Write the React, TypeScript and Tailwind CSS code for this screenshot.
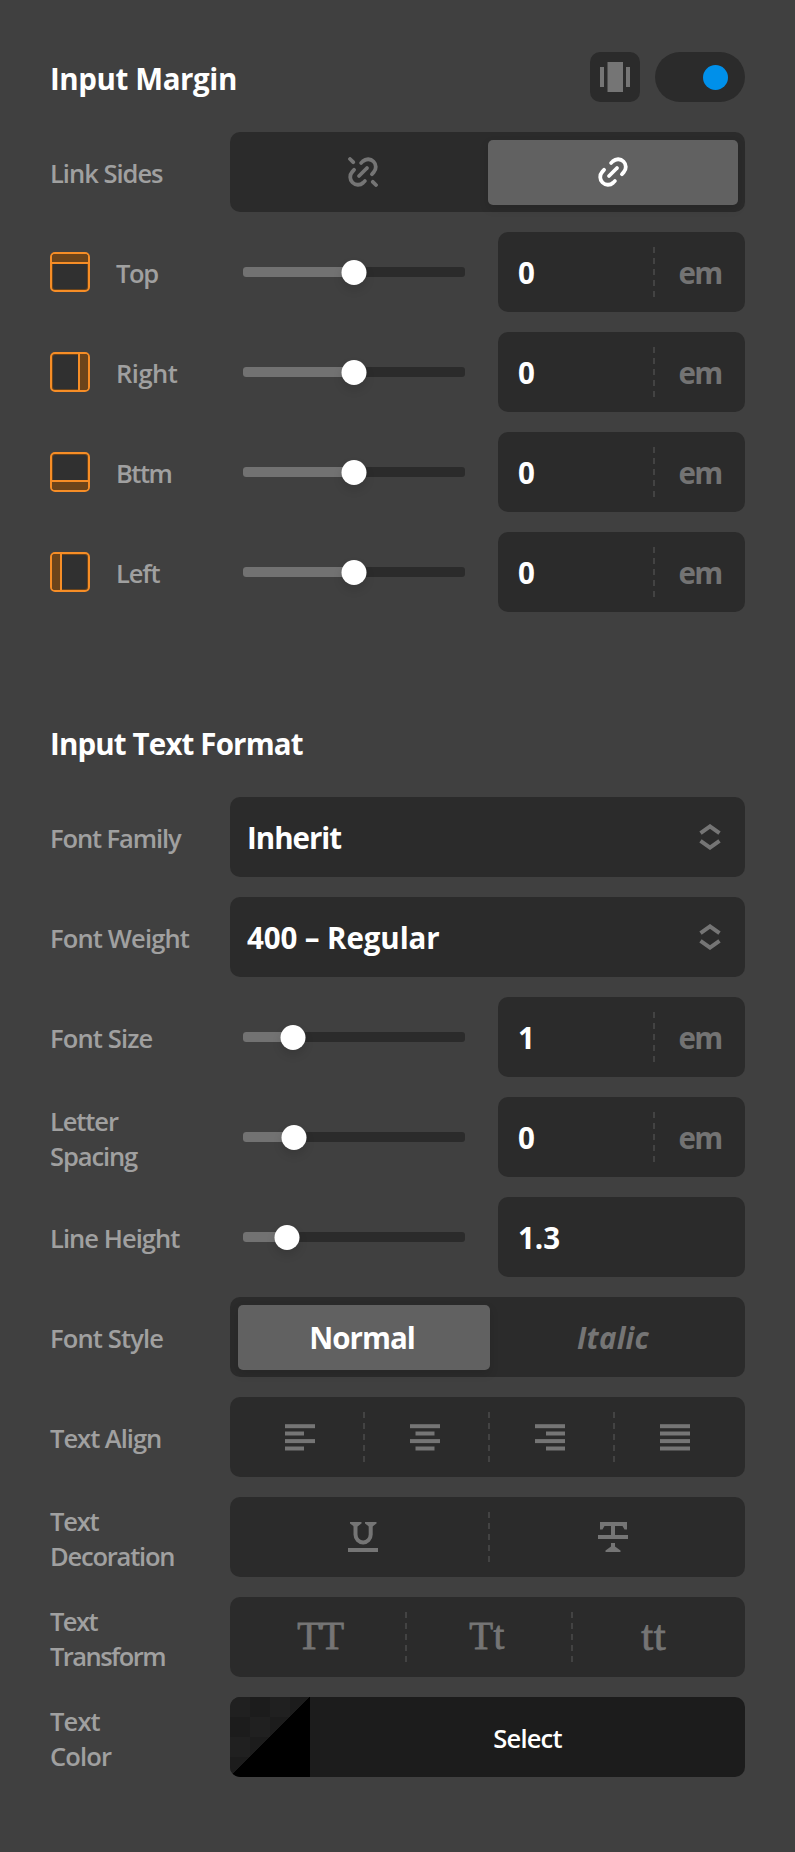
import clsx from "clsx";
import type { ReactNode } from "react";

function LinkIcon({ broken = false }: { broken?: boolean }) {
  return (
    <svg
      width="30"
      height="30"
      viewBox="0 0 30 30"
      fill="none"
      stroke="currentColor"
      strokeWidth="3.8"
      strokeLinecap="round"
    >
      <path d="M13.1 6 14.86 4.26A7.7 7.7 0 0 1 25.74 15.14L23.9 17.2" />
      <path d="M16.9 24 15.14 25.74A7.7 7.7 0 0 1 4.26 14.86L6.1 12.8" />
      <path d="M11 19 19 11" />
      {broken && <path d="M2 2 5.2 5.2M24.8 24.8 28 28" />}
    </svg>
  );
}

function ChevronsIcon() {
  return (
    <svg
      width="22"
      height="26"
      viewBox="0 0 22 26"
      fill="none"
      stroke="currentColor"
      strokeWidth="4"
    >
      <path d="M1.5 9.2 11 2.4 20.5 9.2" />
      <path d="M1.5 16.8 11 23.6 20.5 16.8" />
    </svg>
  );
}

function SpacingIcon() {
  return (
    <svg width="30" height="30" viewBox="0 0 30 30" fill="currentColor">
      <rect x="0" y="5" width="4" height="20" />
      <rect x="7.5" y="0" width="15.5" height="30" />
      <rect x="26" y="5" width="4" height="20" />
    </svg>
  );
}

type Align = "left" | "center" | "right" | "justify";

function AlignIcon({ align }: { align: Align }) {
  const short = align === "justify" ? 30 : 19;
  const x = { left: 0, center: 5.5, right: 11, justify: 0 }[align];

  return (
    <svg
      className="mr-0.5"
      width="30"
      height="27"
      viewBox="0 0 30 27"
      fill="currentColor"
    >
      <rect x="0" y="0.2" width="30" height="4" />
      <rect x={x} y="7.5" width={short} height="4" />
      <rect x="0" y="15.1" width="30" height="4" />
      <rect x={x} y="22.5" width={short} height="4" />
    </svg>
  );
}

function UnderlineIcon() {
  return (
    <svg
      width="30"
      height="30"
      viewBox="0 0 30 30"
      fill="none"
      stroke="currentColor"
    >
      <path d="M7.5 2V12.5a7.6 7.9 0 0 0 15.2 0V2" strokeWidth="4" />
      <path
        d="M2 0H13.5V1.5L9.5 4.5H6L2 1.5ZM17 0H28.5V1.5L24.5 4.5H21L17 1.5Z"
        fill="currentColor"
        stroke="none"
      />
      <path d="M0 28H30" strokeWidth="4" />
    </svg>
  );
}

function StrikeIcon() {
  return (
    <svg width="30" height="30" viewBox="0 0 30 30" fill="currentColor">
      <path d="M2 0H29V7.5H26.5L24.5 4H17V13H13V4H6.5L4.5 7.5H2Z" />
      <rect x="0" y="13" width="30" height="4" />
      <path d="M13 21H17V24.5L22.5 28.5V30H7.5V28.5L13 24.5Z" />
    </svg>
  );
}

type Side = "top" | "right" | "bottom" | "left";

const sideClasses: Record<Side, string> = {
  top: "inset-x-0 top-0 h-2.5 border-b-2",
  right: "inset-y-0 right-0 w-2.5 border-l-2",
  bottom: "inset-x-0 bottom-0 h-2.5 border-t-2",
  left: "inset-y-0 left-0 w-2.5 border-r-2",
};

function SideIcon({ side }: { side: Side }) {
  return (
    <div className="relative mr-[26px] size-10 shrink-0 overflow-hidden rounded-[5px] border-2 border-[#f68d26] bg-[#303030] shadow-[inset_0_0_0_1px_#6c441a]">
      <span
        className={clsx("absolute border-[#f68d26] bg-[#6c441a]", sideClasses[side])}
      />
    </div>
  );
}

type HeaderProps = { title: string; className?: string; children?: ReactNode };

function Header({ title, className, children }: HeaderProps) {
  return (
    <div className="mb-[30px] flex h-[50px] items-center">
      <h2
        className={clsx(
          "flex-1 pt-[3px] text-[29.5px] leading-10 font-bold text-white",
          className,
        )}
      >
        {title}
      </h2>
      {children}
    </div>
  );
}

type RowProps = {
  label: string;
  tracking?: string;
  side?: Side;
  children: ReactNode;
};

function Row({ label, tracking, side, children }: RowProps) {
  return (
    <div className="flex h-20 items-center">
      <div className="flex w-[180px] shrink-0 items-center">
        {side && <SideIcon side={side} />}
        <span
          className={clsx(
            "pt-[3px] text-[25.5px] leading-[35px] font-semibold whitespace-pre-line text-[#a0a0a0]",
            tracking ?? "tracking-[-0.85px]",
          )}
        >
          {label}
        </span>
      </div>
      {children}
    </div>
  );
}

function Dashes() {
  return (
    <span className="h-[50px] w-0.5 shrink-0 bg-[repeating-linear-gradient(to_bottom,#434343_0_6px,transparent_6px_11px)]" />
  );
}

type SliderProps = { pos: number; value: string; unit?: string };

// the track is 222px wide, pos is the centre of the thumb on it
function SliderField({ pos, value, unit }: SliderProps) {
  return (
    <>
      <div className="relative mr-[33px] ml-[13px] h-2.5 w-[222px] shrink-0 rounded-[3px] bg-[#2b2b2b]">
        <div
          className="h-full rounded-l-[3px] bg-[#727272]"
          style={{ width: pos }}
        />
        <span
          className="absolute -top-[7px] size-[25px] -translate-x-1/2 rounded-full bg-white shadow-[0_5px_10px_rgba(0,0,0,0.12)]"
          style={{ left: pos }}
        />
      </div>
      <div className="flex h-20 flex-1 items-center rounded-[10px] bg-[#2b2b2b] pl-5 text-[29.5px] font-bold">
        <span className="flex-1 pt-[3px] text-white">{value}</span>
        {unit && (
          <>
            <Dashes />
            <span className="w-[90px] pt-[3px] text-center tracking-[-1.6px] text-[#737373]">
              {unit}
            </span>
          </>
        )}
      </div>
    </>
  );
}

function SelectField({ value, className }: { value: string; className: string }) {
  return (
    <div className="flex h-20 flex-1 items-center justify-between rounded-[10px] bg-[#2b2b2b] pr-6 pl-[17px] text-[#757575]">
      <span
        className={clsx("pt-[3px] text-[29.5px] font-bold text-white", className)}
      >
        {value}
      </span>
      <ChevronsIcon />
    </div>
  );
}

type ChoiceProps = { items: ReactNode[]; active?: number };

function Choice({ items, active }: ChoiceProps) {
  return (
    <div className="flex h-20 flex-1 items-center rounded-[10px] bg-[#2b2b2b] pr-[7px] pl-2">
      {items.map((item, i) => (
        <div key={i} className="flex h-[65px] flex-1 items-center">
          {i > 0 && active === undefined && <Dashes />}
          <button
            className={clsx(
              "flex h-full flex-1 items-center justify-center",
              i > 0 && active === undefined && "-ml-0.5",
              i === active
                ? "rounded-[5px] bg-[#616161] text-white shadow-[0_4px_10px_rgba(0,0,0,0.12)]"
                : "text-[#757575]",
              i === active && i === 0 && "-mr-0.5",
            )}
          >
            {item}
          </button>
        </div>
      ))}
    </div>
  );
}

const serif =
  "-mt-1 pr-0.5 font-['Liberation_Serif',serif] leading-none [-webkit-text-stroke:0.8px_currentColor]";

export default function App() {
  return (
    <main className="h-[1852px] w-[795px] bg-[#404040] px-[50px] pt-[52px] font-['Open_Sans','Noto_Sans',sans-serif]">
      <section>
        <Header title="Input Margin" className="tracking-[-0.4px]">
          <button className="mr-[15px] flex size-[50px] items-center justify-center rounded-[10px] bg-[#2b2b2b] text-[#757575]">
            <SpacingIcon />
          </button>
          <button className="flex h-[50px] w-[90px] items-center justify-end rounded-full bg-[#2b2b2b] pr-[17px]">
            <span className="size-[25px] rounded-full bg-[#0090ea]" />
          </button>
        </Header>
        <div className="flex flex-col gap-5">
          <Row label="Link Sides" tracking="tracking-[-1px]">
            <Choice active={1} items={[<LinkIcon broken />, <LinkIcon />]} />
          </Row>
          <Row label="Top" side="top" tracking="tracking-[-1.4px]">
            <SliderField pos={111} value="0" unit="em" />
          </Row>
          <Row label="Right" side="right" tracking="tracking-[-0.5px]">
            <SliderField pos={111} value="0" unit="em" />
          </Row>
          <Row label="Bttm" side="bottom" tracking="tracking-[-1.5px]">
            <SliderField pos={111} value="0" unit="em" />
          </Row>
          <Row label="Left" side="left" tracking="tracking-[-1.1px]">
            <SliderField pos={111} value="0" unit="em" />
          </Row>
        </div>
      </section>

      <section className="mt-[105px]">
        <Header title="Input Text Format" className="tracking-[-0.85px]" />
        <div className="flex flex-col gap-5">
          <Row label="Font Family" tracking="tracking-[-1.1px]">
            <SelectField value="Inherit" className="tracking-[-1px]" />
          </Row>
          <Row label="Font Weight">
            <SelectField value="400 – Regular" className="tracking-[-0.1px]" />
          </Row>
          <Row label="Font Size">
            <SliderField pos={49.5} value="1" unit="em" />
          </Row>
          <Row label={"Letter\nSpacing"} tracking="tracking-[-1.1px]">
            <SliderField pos={51} value="0" unit="em" />
          </Row>
          <Row label="Line Height" tracking="tracking-[-0.95px]">
            <SliderField pos={44} value="1.3" />
          </Row>
          <Row label="Font Style">
            <Choice
              active={0}
              items={[
                <span className="pt-[3px] pr-1 text-[29.5px] font-bold tracking-[-1px]">
                  Normal
                </span>,
                <span className="pt-[3px] text-[29.5px] font-bold tracking-[0.2px] italic">
                  Italic
                </span>,
              ]}
            />
          </Row>
          <Row label="Text Align" tracking="tracking-[-1px]">
            <Choice
              items={[
                <AlignIcon align="left" />,
                <AlignIcon align="center" />,
                <AlignIcon align="right" />,
                <AlignIcon align="justify" />,
              ]}
            />
          </Row>
          <Row label={"Text\nDecoration"} tracking="tracking-[-1.2px]">
            <Choice items={[<UnderlineIcon />, <StrikeIcon />]} />
          </Row>
          <Row label={"Text\nTransform"} tracking="tracking-[-1.55px]">
            <Choice
              items={[
                <span className={clsx(serif, "text-[39px] tracking-[-0.8px]")}>
                  TT
                </span>,
                <span className={clsx(serif, "text-[39px] tracking-[0.5px]")}>
                  Tt
                </span>,
                <span className={clsx(serif, "text-[43px] tracking-[0.6px]")}>
                  tt
                </span>,
              ]}
            />
          </Row>
          <Row label={"Text\nColor"}>
            <button className="flex h-20 flex-1 items-center overflow-hidden rounded-[10px] bg-[#1c1c1c]">
              <span className="size-20 bg-[linear-gradient(135deg,transparent_50%,#000_50%),repeating-conic-gradient(#1c1c1c_0_25%,#202020_0_50%)] bg-size-[80px_80px,40px_40px]" />
              <span className="flex-1 pt-0.5 text-[25.5px] font-semibold tracking-[-0.8px] text-white">
                Select
              </span>
            </button>
          </Row>
        </div>
      </section>
    </main>
  );
}
